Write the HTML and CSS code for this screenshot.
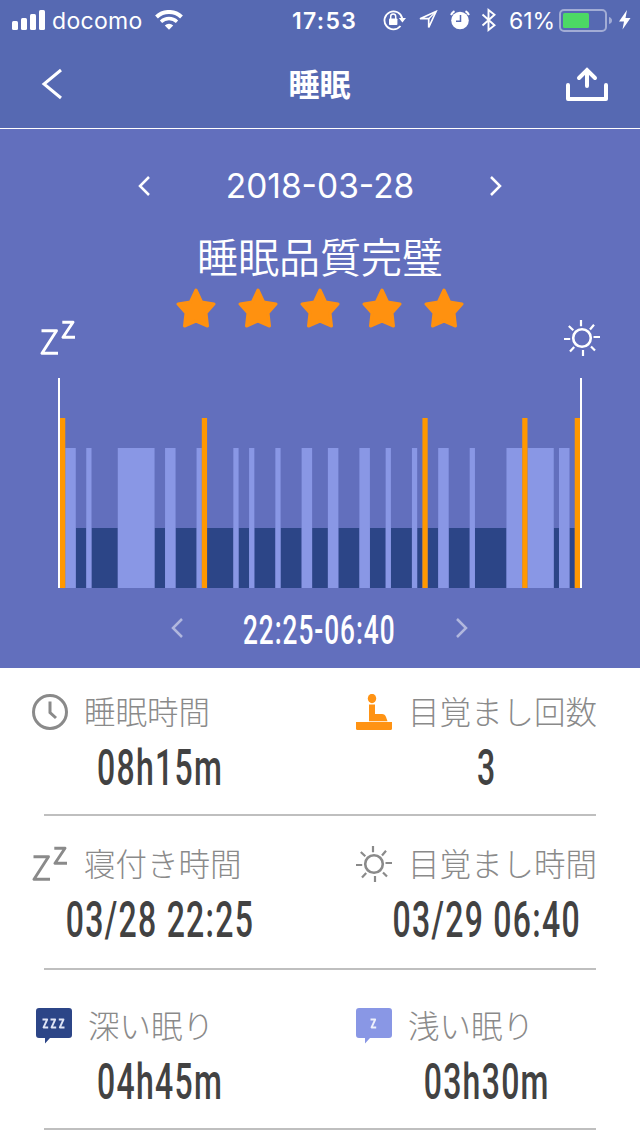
FILE: index.html
```html
<!DOCTYPE html>
<html lang="ja">
<head>
  <meta charset="UTF-8">
  <meta name="viewport" content="width=device-width, initial-scale=1.0">
  <title>睡眠</title>
  <link rel="stylesheet" href="styles.css">
</head>
<body>

  <!-- Shared icons -->
  <svg class="defs" width="0" height="0">
    <symbol id="zz" viewBox="0 0 36 36">
      <path d="M1.500 10.800H16.500L2 33.300H18M22.300 2.300H33L23 17.300H35" fill="none" stroke="currentColor" stroke-width="2.900" stroke-linejoin="round"/>
    </symbol>
    <symbol id="sun" viewBox="0 0 36 36">
      <g fill="none" stroke="currentColor" stroke-width="2.600">
        <circle cx="18" cy="18" r="8.800"/>
        <path d="M17 0V6.200M19 30V36M0 19H6.200M29.500 17H36M4.800 6L9.300 10.200M26 9.500L30 4.800M6 31.500L10.200 27M27 26.500L31 30.500" stroke-width="2.200"/>
      </g>
    </symbol>
    <symbol id="star" viewBox="0 0 40 40">
      <path d="M20 2L25.600 14L38 16L30 25L31.500 38L20 33L8.500 38L10 25L2 16L14.400 14Z" fill="currentColor" stroke="currentColor" stroke-width="3" stroke-linejoin="round"/>
    </symbol>
    <symbol id="prev" viewBox="0 0 12 20">
      <path d="M11 1L2 10L11 19" fill="none" stroke="currentColor" stroke-width="2.500"/>
    </symbol>
    <symbol id="next" viewBox="0 0 12 20">
      <path d="M1 1L10 10L1 19" fill="none" stroke="currentColor" stroke-width="2.500"/>
    </symbol>
  </svg>

  <!-- Status bar -->
  <div class="status">
    <svg class="signal" width="34" height="20" viewBox="0 0 34 20" fill="#fff">
      <rect x="0" y="11" width="6" height="9" rx="1.500"/>
      <rect x="9" y="8" width="6" height="12" rx="1.500"/>
      <rect x="18" y="4" width="6" height="16" rx="1.500"/>
      <rect x="27" y="0" width="6" height="20" rx="1.500"/>
    </svg>
    <span class="carrier">docomo</span>
    <svg class="wifi" width="28" height="20" viewBox="0 0 28 20">
      <path d="M1.500 7A18 18 0 0 1 26.500 7" fill="none" stroke="#fff" stroke-width="4"/>
      <path d="M6 11.700A11.600 11.600 0 0 1 22 11.700" fill="none" stroke="#fff" stroke-width="3.300"/>
      <path d="M9.800 15.500A6 6 0 0 1 18.200 15.500L14 19.800Z" fill="#fff"/>
    </svg>
    <span class="time">17:53</span>
    <svg class="lock" width="23" height="22" viewBox="0 0 23 22">
      <path d="M17.500 17A9 9 0 1 1 19.300 9.500" fill="none" stroke="#fff" stroke-width="1.800"/>
      <path d="M15.800 9H23L19.400 13.500Z" fill="#fff"/>
      <rect x="6" y="9.500" width="8.400" height="6.500" rx=".8" fill="#fff"/>
      <path d="M7.700 10V7.500A2.500 2.500 0 0 1 12.700 7.500V10" fill="none" stroke="#fff" stroke-width="1.500"/>
    </svg>
    <svg class="location" width="20" height="20" viewBox="0 0 20 20">
      <path d="M2 8.700L18 1.500L10.700 17.500V8.700Z" fill="none" stroke="#fff" stroke-width="1.700"/>
      <path d="M18 1.500L10.700 8.700" stroke="#fff" stroke-width="1.200"/>
    </svg>
    <svg class="alarm" width="20" height="20" viewBox="0 0 20 20">
      <circle cx="10" cy="10.500" r="8.800" fill="#fff"/>
      <path d="M1 5A9 9 0 0 1 4.500 1.200M15.500 1.200A9 9 0 0 1 19 5" fill="none" stroke="#fff" stroke-width="2"/>
      <path d="M10.500 5V11.300H6" fill="none" stroke="#5669b2" stroke-width="1.500"/>
    </svg>
    <svg class="bluetooth" width="16" height="24" viewBox="0 0 16 24">
      <path d="M1.500 6.500L13.500 17.200L7.500 22V2L13.500 6.800L1.500 17.500" fill="none" stroke="#fff" stroke-width="1.900"/>
    </svg>
    <span class="percent">61%</span>
    <svg class="battery" width="54" height="24" viewBox="0 0 54 24">
      <rect x="1" y="1" width="46" height="21" rx="4" fill="none" stroke="#fff" stroke-opacity=".45" stroke-width="2"/>
      <path d="M50 8Q53 9 53 11.500Q53 14 50 15Z" fill="#fff" fill-opacity=".45"/>
      <rect x="4" y="4" width="26" height="15" rx="1.500" fill="#4cd964"/>
    </svg>
    <svg class="bolt" width="12" height="20" viewBox="0 0 12 20">
      <path d="M8 0L0 11.500H5L3.500 19.500L11.500 8H6.500Z" fill="#fff"/>
    </svg>
  </div>

  <!-- Header -->
  <header>
    <svg width="22" height="32" viewBox="0 0 22 32">
      <path d="M20 2L3 16L20 30" fill="none" stroke="#fff" stroke-width="3"/>
    </svg>
    <h1>睡眠</h1>
    <svg width="42" height="34" viewBox="0 0 42 34">
      <path d="M2 18V32H40V18" fill="none" stroke="#fff" stroke-width="4" stroke-linejoin="round" stroke-linecap="round"/>
      <path d="M21 19V3M13 11L21 3L29 11" fill="none" stroke="#fff" stroke-width="4" stroke-linecap="round"/>
    </svg>
  </header>

  <!-- Sleep graph -->
  <section class="sleep">
    <div class="date">
      <svg width="12" height="20"><use href="#prev"/></svg>
      <span class="day">2018-03-28</span>
      <svg width="12" height="20"><use href="#next"/></svg>
    </div>
    <h2>睡眠品質完璧</h2>
    <div class="stars">
      <svg width="40" height="40"><use href="#star"/></svg>
      <svg width="40" height="40"><use href="#star"/></svg>
      <svg width="40" height="40"><use href="#star"/></svg>
      <svg width="40" height="40"><use href="#star"/></svg>
      <svg width="40" height="40"><use href="#star"/></svg>
    </div>
    <div class="ends">
      <svg width="36" height="36"><use href="#zz"/></svg>
      <svg width="36" height="36"><use href="#sun"/></svg>
    </div>
    <div class="chart">
      <!-- 1 unit = 5 minutes -->
      <svg width="520" height="210" viewBox="0 0 99 210" preserveAspectRatio="none">
        <g class="deep">
          <rect x="3" y="150" width="2" height="60"/>
          <rect x="6" y="150" width="5" height="60"/>
          <rect x="18" y="150" width="2" height="60"/>
          <rect x="22" y="150" width="4" height="60"/>
          <rect x="28" y="150" width="5" height="60"/>
          <rect x="34" y="150" width="2" height="60"/>
          <rect x="37" y="150" width="4" height="60"/>
          <rect x="42" y="150" width="4" height="60"/>
          <rect x="48" y="150" width="3" height="60"/>
          <rect x="53" y="150" width="4" height="60"/>
          <rect x="59" y="150" width="3" height="60"/>
          <rect x="63" y="150" width="4" height="60"/>
          <rect x="68" y="150" width="1" height="60"/>
          <rect x="70" y="150" width="2" height="60"/>
          <rect x="74" y="150" width="4" height="60"/>
          <rect x="79" y="150" width="6" height="60"/>
          <rect x="94" y="150" width="1" height="60"/>
          <rect x="97" y="150" width="1" height="60"/>
        </g>
        <g class="light">
          <rect x="1" y="70" width="2" height="140"/>
          <rect x="5" y="70" width="1" height="140"/>
          <rect x="11" y="70" width="7" height="140"/>
          <rect x="20" y="70" width="2" height="140"/>
          <rect x="26" y="70" width="1" height="140"/>
          <rect x="33" y="70" width="1" height="140"/>
          <rect x="36" y="70" width="1" height="140"/>
          <rect x="41" y="70" width="1" height="140"/>
          <rect x="46" y="70" width="2" height="140"/>
          <rect x="51" y="70" width="2" height="140"/>
          <rect x="57" y="70" width="2" height="140"/>
          <rect x="62" y="70" width="1" height="140"/>
          <rect x="67" y="70" width="1" height="140"/>
          <rect x="72" y="70" width="2" height="140"/>
          <rect x="78" y="70" width="1" height="140"/>
          <rect x="85" y="70" width="3" height="140"/>
          <rect x="89" y="70" width="5" height="140"/>
          <rect x="95" y="70" width="2" height="140"/>
        </g>
        <g class="awake">
          <rect x="0" y="40" width="1" height="170"/>
          <rect x="27" y="40" width="1" height="170"/>
          <rect x="69" y="40" width="1" height="170"/>
          <rect x="88" y="40" width="1" height="170"/>
          <rect x="98" y="40" width="1" height="170"/>
        </g>
      </svg>
    </div>
    <div class="range">
      <svg width="12" height="20"><use href="#prev"/></svg>
      <span class="num">22:25-06:40</span>
      <svg width="12" height="20"><use href="#next"/></svg>
    </div>
  </section>

  <!-- Details -->
  <section class="details">
    <div class="row">
      <div class="item">
        <div class="label">
          <svg width="36" height="36" viewBox="0 0 36 36">
            <circle cx="18" cy="18" r="16.500" fill="none" stroke="#8a8a8a" stroke-width="3"/>
            <path d="M18 7.500V18.500L24 24" fill="none" stroke="#8a8a8a" stroke-width="3"/>
          </svg>
          <span>睡眠時間</span>
        </div>
        <div class="num">08h15m</div>
      </div>
      <div class="item">
        <div class="label">
          <svg width="36" height="36" viewBox="0 0 36 36" fill="#ff9314">
            <ellipse cx="16" cy="4.500" rx="4.200" ry="4.700"/>
            <path d="M13 10.500H19V20H26Q29 20 30 23L31.500 27.300H13Z"/>
            <path d="M0 28H36V34.500Q36 36 34.500 36H1.500Q0 36 0 34.500Z"/>
          </svg>
          <span>目覚まし回数</span>
        </div>
        <div class="num">3</div>
      </div>
    </div>

    <div class="row">
      <div class="item">
        <div class="label">
          <svg width="36" height="36"><use href="#zz"/></svg>
          <span>寝付き時間</span>
        </div>
        <div class="num">03/28 22:25</div>
      </div>
      <div class="item">
        <div class="label">
          <svg width="36" height="36"><use href="#sun"/></svg>
          <span>目覚まし時間</span>
        </div>
        <div class="num">03/29 06:40</div>
      </div>
    </div>

    <div class="row">
      <div class="item">
        <div class="label shift">
          <svg width="36" height="36" viewBox="0 0 36 36">
            <path d="M3 0H33Q36 0 36 3V27Q36 30 33 30H14L9 35.500V30H3Q0 30 0 27V3Q0 0 3 0Z" fill="#2c4587"/>
            <path d="M6.500 11.500H11.200L7.500 19.500H12.200M14.500 11.500H19.200L15.500 19.500H20.200M22.800 11.500H27.500L23.800 19.500H28.500" fill="none" stroke="#dfe4f5" stroke-width="1.800" stroke-linejoin="round"/>
          </svg>
          <span>深い眠り</span>
        </div>
        <div class="num">04h45m</div>
      </div>
      <div class="item">
        <div class="label">
          <svg width="36" height="36" viewBox="0 0 36 36">
            <path d="M3 0H33Q36 0 36 3V27Q36 30 33 30H14L9 35.500V30H3Q0 30 0 27V3Q0 0 3 0Z" fill="#8997e5"/>
            <path d="M14.500 11.500H19.200L15.500 19.500H20.200" fill="none" stroke="#eef0fc" stroke-width="1.800" stroke-linejoin="round"/>
          </svg>
          <span>浅い眠り</span>
        </div>
        <div class="num">03h30m</div>
      </div>
    </div>
  </section>

</body>
</html>
```
FILE: styles.css
```css
* {
  box-sizing: border-box;
}
body {
  margin: 0;
  width: 640px;
  height: 1136px;
  overflow: hidden;
  background-color: #fff;
  color: #424242;
  font-family: Inter, "Noto Sans CJK JP", sans-serif;
}
svg {
  display: block;
  flex: none;
}
.defs {
  display: none;
}

/* Status bar */
.status {
  display: flex;
  align-items: center;
  height: 40px;
  padding-left: 12px;
  background-color: #5669b2;
  color: white;
  font-size: 23px;
  line-height: 38px;
  white-space: nowrap;
}
.status span {
  padding-top: 2px;
}
.carrier {
  width: 96px;
  margin-left: 6px;
  letter-spacing: 0.3px;
}
.wifi {
  margin-left: 7px;
}
.time {
  width: 66px;
  margin-left: 109px;
  font-weight: 600;
  letter-spacing: 1.3px;
}
.lock {
  margin-left: 25px;
}
.location {
  margin-left: 12px;
}
.alarm {
  margin-left: 12px;
}
.bluetooth {
  margin-left: 11px;
}
.percent {
  width: 47px;
  margin-left: 12px;
}
.battery {
  margin-top: 2px;
  margin-left: 3px;
}
.bolt {
  margin-left: 6px;
}

/* Header */
header {
  display: flex;
  align-items: center;
  justify-content: space-between;
  height: 89px;
  padding: 0 32px 0 41px;
  border-bottom: 1px solid white;
  background-color: #5669b2;
  color: white;
}
h1 {
  margin: 0 0 3px 10px;
  font-family: "Noto Sans CJK JP", sans-serif;
  font-size: 31px;
  font-weight: bold;
}

/* Sleep graph */
.sleep {
  height: 539px;
  padding-top: 32px;
  background-color: #626fbd;
  color: white;
}
.date {
  display: flex;
  align-items: center;
  justify-content: space-between;
  width: 364px;
  height: 50px;
  margin: 0 auto;
}
.day {
  font-size: 33.500px;
}
h2 {
  height: 60px;
  margin: 14px 0 0;
  font-family: "Noto Sans CJK JP", sans-serif;
  font-size: 41px;
  font-weight: 350;
  line-height: 60px;
  text-align: center;
}
.stars {
  display: flex;
  justify-content: center;
  gap: 22px;
  margin-top: 3px;
  color: #ff910f;
}
.ends {
  display: flex;
  justify-content: space-between;
  margin-top: -8px;
  padding: 0 40px;
}
.chart {
  width: 524px;
  height: 210px;
  margin: 22px 0 0 58px;
  border-left: 2px solid white;
  border-right: 2px solid white;
}
.deep {
  fill: #2c4587;
}
.light {
  fill: #8997e5;
}
.awake {
  fill: #ff9800;
}
.range {
  display: flex;
  align-items: center;
  justify-content: space-between;
  width: 297px;
  height: 80px;
  margin-left: 171px;
}
.range svg {
  opacity: 0.5;
}

/* Narrow digits */
.num {
  font-family: Roboto, sans-serif;
  font-size: 50px;
  font-weight: 500;
  line-height: 60px;
  letter-spacing: 2px;
  text-align: center;
  white-space: nowrap;
  transform: scaleX(0.64);
}
.range .num {
  margin: 4px -20px 0;
  font-size: 41px;
  letter-spacing: 1.5px;
}

/* Details */
.row {
  display: flex;
  position: relative;
  height: 154px;
  padding-top: 28px;
}
.row:first-child {
  height: 148px;
  padding-top: 24px;
}
.row:last-child {
  height: 160px;
  padding-top: 36px;
}
.row::after {
  content: "";
  position: absolute;
  left: 44px;
  right: 44px;
  bottom: 0;
  height: 2px;
  background-color: #bfbfbf;
}
.item {
  width: 320px;
}
.label {
  display: flex;
  align-items: center;
  gap: 16px;
  height: 40px;
  padding-left: 32px;
  color: #8a8a8a;
  font-family: "Noto Sans CJK JP", sans-serif;
  font-size: 31.500px;
  font-weight: 300;
  line-height: 40px;
  white-space: nowrap;
}
.label span {
  margin-bottom: 5px;
}
.label.shift {
  padding-left: 36px;
}
.item + .item .label {
  padding-left: 36px;
}
.item + .item .num {
  padding-left: 21px;
}
.item .num {
  margin-top: 6px;
}
```
